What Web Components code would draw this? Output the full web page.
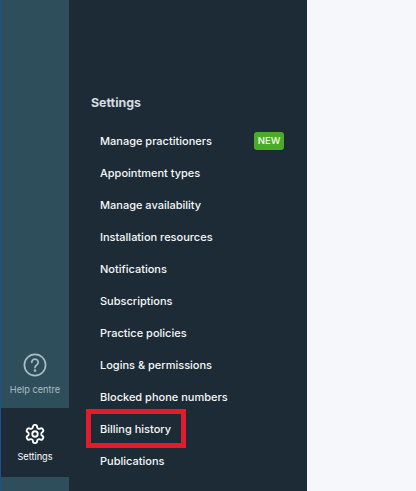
<!DOCTYPE html>
<html><head><meta charset="utf-8"><style>
html,body{margin:0;height:100%;overflow:hidden;background:#f6f7fb}
body{font-family:Inter,"Liberation Sans",sans-serif}
</style></head><body>
<template id="shell-t"><style>
:host{display:flex;width:416px;height:491px;overflow:hidden;background:#f6f7fb}
.main{flex:1}
</style><slot></slot><div class="main"></div></template>

<template id="rail-t"><style>
:host{display:flex;flex-direction:column;justify-content:flex-end;box-sizing:border-box;width:69px;height:491px;padding-bottom:14px;background:#2e4e5b;border-left:1px solid #1d4f91;flex:none}
</style><slot></slot></template>

<template id="rail-item-t"><style>
:host{display:flex;flex-direction:column;align-items:center;box-sizing:border-box;height:69px;padding-top:14px;color:#aebdc3;font-size:9.2px;line-height:14px;font-weight:400}
:host([active]){background:#1c2b36;color:#fff}
.i{display:flex;align-items:center;justify-content:center;height:24px;margin-bottom:6px}
:host([active]) .i{margin-bottom:4px}
</style><div class="i"><slot name="icon"></slot></div><slot></slot></template>

<template id="panel-t"><style>
:host{display:flex;flex-direction:column;box-sizing:border-box;width:238px;height:491px;padding:94px 23px 0 22px;background:#1c2b36;flex:none;position:relative}
h2{margin:0 0 13px;font-size:12.4px;line-height:18px;font-weight:700;color:#d5dde0}
.hl{position:absolute;left:17px;top:409px;width:90px;height:29px;border:5px solid #e31b2b}
</style><h2>Settings</h2><slot></slot><div class="hl"></div></template>

<template id="menu-item-t"><style>
:host{display:flex;align-items:center;justify-content:space-between;height:32px;padding-left:9px;font-size:11px;font-weight:450;color:#f6f8f9;white-space:nowrap}
</style><slot></slot><slot name="badge"></slot></template>

<template id="new-badge-t"><style>
:host{display:block;box-sizing:border-box;width:30px;height:18px;border-radius:3px;background:#4bab24;color:#e6f7de;font-size:9.5px;font-weight:600;line-height:17px;text-align:center;margin-top:-1px}
</style><slot></slot></template>

<app-shell>
<side-rail>
<rail-item>
<svg slot="icon" width="24" height="24" viewBox="0 0 24 24" fill="none" stroke="#aebdc3" stroke-width="1.7" stroke-linecap="round"><circle cx="12" cy="12" r="10.6"/><path d="M8.8 9.3a3.2 3.2 0 1 1 4.9 2.7c-1 .7-1.7 1.3-1.7 2.6"/><circle cx="12" cy="17.6" r=".5" fill="#aebdc3"/></svg>
Help centre</rail-item>
<rail-item active>
<svg slot="icon" width="22" height="22" viewBox="0 0 24 24" fill="none" stroke="#fff" stroke-width="2" stroke-linecap="round" stroke-linejoin="round"><path d="M12.22 2h-.44a2 2 0 0 0-2 2v.18a2 2 0 0 1-1 1.73l-.43.25a2 2 0 0 1-2 0l-.15-.08a2 2 0 0 0-2.73.73l-.22.38a2 2 0 0 0 .73 2.73l.15.1a2 2 0 0 1 1 1.72v.51a2 2 0 0 1-1 1.74l-.15.09a2 2 0 0 0-.73 2.73l.22.38a2 2 0 0 0 2.73.73l.15-.08a2 2 0 0 1 2 0l.43.25a2 2 0 0 1 1 1.73V20a2 2 0 0 0 2 2h.44a2 2 0 0 0 2-2v-.18a2 2 0 0 1 1-1.73l.43-.25a2 2 0 0 1 2 0l.15.08a2 2 0 0 0 2.73-.73l.22-.39a2 2 0 0 0-.73-2.73l-.15-.08a2 2 0 0 1-1-1.74v-.5a2 2 0 0 1 1-1.74l.15-.09a2 2 0 0 0 .73-2.73l-.22-.38a2 2 0 0 0-2.73-.73l-.15.08a2 2 0 0 1-2 0l-.43-.25a2 2 0 0 1-1-1.73V4a2 2 0 0 0-2-2z"/><circle cx="12" cy="12" r="3"/></svg>
Settings</rail-item>
</side-rail>
<settings-panel>
<menu-item>Manage practitioners<new-badge slot="badge">NEW</new-badge></menu-item>
<menu-item>Appointment types</menu-item>
<menu-item>Manage availability</menu-item>
<menu-item>Installation resources</menu-item>
<menu-item>Notifications</menu-item>
<menu-item>Subscriptions</menu-item>
<menu-item>Practice policies</menu-item>
<menu-item>Logins &amp; permissions</menu-item>
<menu-item>Blocked phone numbers</menu-item>
<menu-item>Billing history</menu-item>
<menu-item>Publications</menu-item>
</settings-panel>
</app-shell>
<script>
const reg=(n,t)=>customElements.define(n,class extends HTMLElement{constructor(){super();this.attachShadow({mode:'open'}).appendChild(document.getElementById(t).content.cloneNode(true));}});
reg('app-shell','shell-t');reg('side-rail','rail-t');reg('rail-item','rail-item-t');reg('settings-panel','panel-t');reg('menu-item','menu-item-t');reg('new-badge','new-badge-t');
</script>
</body></html>
